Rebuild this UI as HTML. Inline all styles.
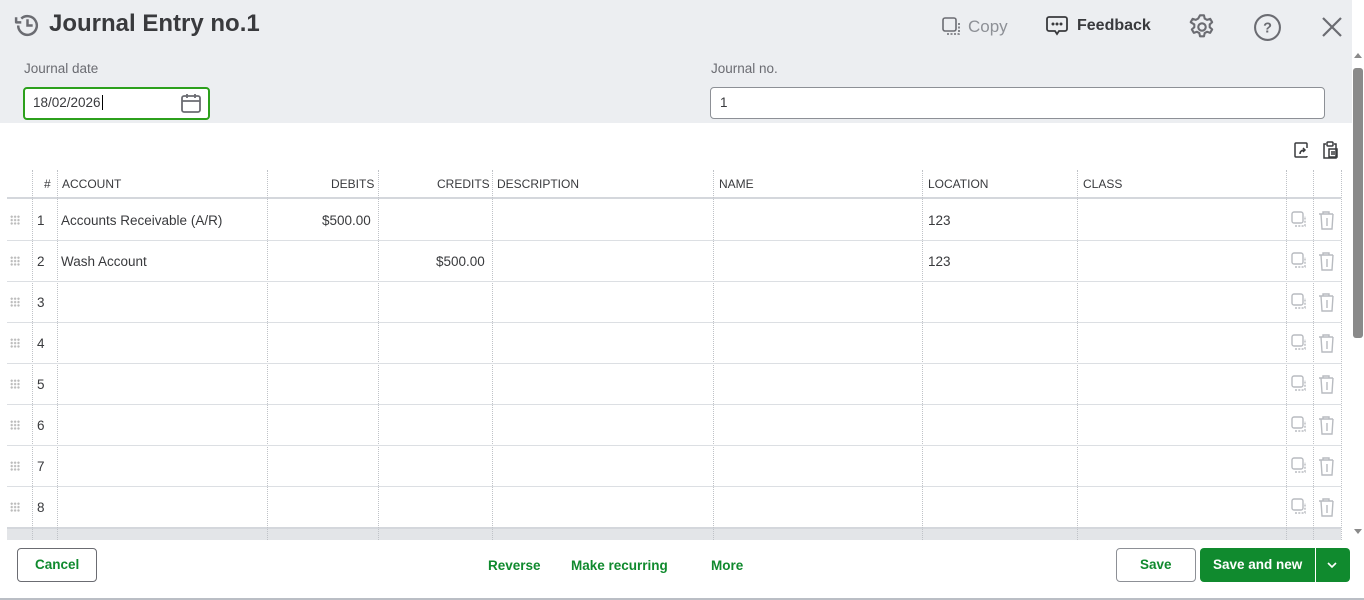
<!DOCTYPE html>
<html><head><meta charset="utf-8"><style>
*{margin:0;padding:0;box-sizing:border-box}
body{width:1364px;height:600px;overflow:hidden;background:#fff;font-family:"Liberation Sans",sans-serif;color:#393a3d;position:relative}
.a{position:absolute}
.hdr{left:0;top:0;width:1352px;height:123px;background:#eceef1}
.vl{position:absolute;top:170px;height:370px;width:0;border-left:1px dotted #bfc2c7}
.hl{position:absolute;left:7px;width:1334px;height:1px;background:#dcdfe3}
.th{position:absolute;top:177px;font-size:12px;color:#393a3d}
.td{position:absolute;font-size:13.5px;color:#393a3d}
.grip{position:absolute;left:10px;width:10px;height:10px;background:radial-gradient(circle,#bbb 1px,transparent 1.3px) 0 0/3.4px 3.4px}
.btn{position:absolute;font-weight:bold;font-size:13.5px;color:#108a2e}
</style></head><body>
<div class="a hdr"></div>
<svg class="a" style="left:13px;top:11px" width="29" height="29" viewBox="0 0 28 28" fill="none" stroke="#6b6c72" stroke-width="2.4"><path d="M5 14a9 9 0 1 0 3-6.7"/><path d="M3 6v5h5" stroke-linejoin="round"/><path d="M14 8v6h5"/></svg>
<div class="a" style="left:49px;top:10px;font-size:24px;font-weight:bold;color:#393a3d">Journal Entry no.1</div>
<svg class="a" style="left:941px;top:16px" width="22" height="20" viewBox="0 0 22 20" fill="none" stroke="#6b6c72" stroke-width="1.6"><rect x="2" y="2" width="13" height="13" rx="2"/><path d="M6 18h12v-12" stroke-dasharray="2 1.5"/></svg>
<div class="a" style="left:968px;top:17px;font-size:17px;color:#8d9096">Copy</div>
<svg class="a" style="left:1045px;top:15px" width="24" height="22" viewBox="0 0 24 22" fill="none" stroke="#393a3d" stroke-width="1.8"><path d="M4 2h16a2 2 0 0 1 2 2v10a2 2 0 0 1-2 2h-6l-2 3-2-3H4a2 2 0 0 1-2-2V4a2 2 0 0 1 2-2z"/><circle cx="8" cy="9" r=".6" fill="#393a3d"/><circle cx="12" cy="9" r=".6" fill="#393a3d"/><circle cx="16" cy="9" r=".6" fill="#393a3d"/></svg>
<div class="a" style="left:1077px;top:17px;font-size:16px;font-weight:bold;color:#393a3d">Feedback</div>
<svg class="a" style="left:1188px;top:13px" width="28" height="28" viewBox="0 0 24 24" fill="none" stroke="#6b6c72" stroke-width="1.8"><circle cx="12" cy="12" r="3.2"/><path d="M10.3 2h3.4l.6 2.8 2 1.1 2.7-.9 1.7 2.9-2.1 1.9v2.4l2.1 1.9-1.7 2.9-2.7-.9-2 1.1-.6 2.8h-3.4l-.6-2.8-2-1.1-2.7.9-1.7-2.9 2.1-1.9v-2.4L2.3 7.9 4 5l2.7.9 2-1.1z" stroke-linejoin="round"/></svg>
<svg class="a" style="left:1253px;top:13px" width="29" height="29" viewBox="0 0 28 28" fill="none" stroke="#6b6c72" stroke-width="2"><circle cx="14" cy="14" r="12"/><text x="14" y="19" font-size="14" font-weight="bold" text-anchor="middle" fill="#6b6c72" stroke="none" font-family="Liberation Sans">?</text></svg>
<svg class="a" style="left:1321px;top:16px" width="22" height="22" viewBox="0 0 22 22" stroke="#6b6c72" stroke-width="2.2"><path d="M2 2l18 18M20 2L2 20"/></svg>
<div class="a" style="left:24px;top:61px;font-size:13.5px;color:#6b6c72">Journal date</div>
<div class="a" style="left:23px;top:87px;width:187px;height:33px;border:2px solid #2ca01c;border-radius:4px;background:#fff"></div>
<div class="a" style="left:33px;top:95px;font-size:13.5px;color:#393a3d">18/02/2026<span style="border-left:1px solid #000;margin-left:1px"></span></div>
<svg class="a" style="left:180px;top:92px" width="22" height="22" viewBox="0 0 22 22" fill="none" stroke="#6b6c72" stroke-width="1.8"><rect x="2" y="4" width="18" height="16" rx="2"/><path d="M2 9h18M7 2v4M15 2v4"/></svg>
<div class="a" style="left:711px;top:61px;font-size:13.5px;color:#6b6c72">Journal no.</div>
<div class="a" style="left:710px;top:87px;width:615px;height:32px;border:1px solid #8d9096;border-radius:4px;background:#fff"></div>
<div class="a" style="left:720px;top:95px;font-size:13.5px">1</div>
<div class="a" style="left:1352px;top:50px;width:12px;height:490px;background:#fff"></div>
<div class="a" style="left:1353px;top:68px;width:10px;height:270px;background:#8a8a8a;border-radius:3px"></div>
<div class="a" style="left:1354px;top:53px;border:4px solid transparent;border-bottom:5px solid #8a8a8a;border-top:0"></div>
<div class="a" style="left:1354px;top:529px;border:4px solid transparent;border-top:5px solid #8a8a8a;border-bottom:0"></div>
<svg class="a" style="left:1293px;top:141px" width="18" height="18" viewBox="0 0 18 18" fill="none" stroke="#393a3d" stroke-width="1.5"><path d="M14 7V3a1 1 0 0 0-1-1H3a1 1 0 0 0-1 1v12a1 1 0 0 0 1 1h10a1 1 0 0 0 1-1"/><path d="M7 13c0-3 2-4 5-4M10 7l2 2-2 2"/></svg>
<svg class="a" style="left:1321px;top:140px" width="18" height="20" viewBox="0 0 18 20" fill="none" stroke="#393a3d" stroke-width="1.5"><path d="M5 4H3v14h12V4h-2"/><rect x="6" y="2" width="6" height="4" rx="1"/><rect x="8" y="9" width="8" height="8"/><path d="M10 12h4M10 14h4"/></svg>
<div class="hl" style="top:197px;height:2px;background:#d4d7dc"></div>
<div class="a" style="left:7px;top:527px;width:1334px;height:13px;background:#e3e5e8;border-top:2px solid #d4d7dc"></div>
<div class="vl" style="left:32px"></div><div class="vl" style="left:57px"></div><div class="vl" style="left:267px"></div><div class="vl" style="left:378px"></div><div class="vl" style="left:492px"></div><div class="vl" style="left:713px"></div><div class="vl" style="left:922px"></div><div class="vl" style="left:1077px"></div><div class="vl" style="left:1286px"></div><div class="vl" style="left:1313px"></div><div class="vl" style="left:1341px"></div>
<div class="th" style="left:44px">#</div>
<div class="th" style="left:62px">ACCOUNT</div>
<div class="th" style="left:331px">DEBITS</div>
<div class="th" style="left:437px">CREDITS</div>
<div class="th" style="left:497px">DESCRIPTION</div>
<div class="th" style="left:719px">NAME</div>
<div class="th" style="left:928px">LOCATION</div>
<div class="th" style="left:1083px">CLASS</div>
<div class="hl" style="top:240px"></div><div class="hl" style="top:281px"></div><div class="hl" style="top:322px"></div><div class="hl" style="top:363px"></div><div class="hl" style="top:404px"></div><div class="hl" style="top:445px"></div><div class="hl" style="top:486px"></div>
<div class="td" style="left:61px;top:213px">Accounts Receivable (A/R)</div>
<div class="td" style="left:322px;top:213px">$500.00</div>
<div class="td" style="left:928px;top:213px">123</div>
<div class="td" style="left:61px;top:254px">Wash Account</div>
<div class="td" style="left:436px;top:254px">$500.00</div>
<div class="td" style="left:928px;top:254px">123</div>
<div class="td" style="left:37px;top:213px">1</div><div class="td" style="left:37px;top:254px">2</div><div class="td" style="left:37px;top:295px">3</div><div class="td" style="left:37px;top:336px">4</div><div class="td" style="left:37px;top:377px">5</div><div class="td" style="left:37px;top:418px">6</div><div class="td" style="left:37px;top:459px">7</div><div class="td" style="left:37px;top:500px">8</div>
<div class="grip" style="top:215px"></div><div class="grip" style="top:256px"></div><div class="grip" style="top:297px"></div><div class="grip" style="top:338px"></div><div class="grip" style="top:379px"></div><div class="grip" style="top:420px"></div><div class="grip" style="top:461px"></div><div class="grip" style="top:502px"></div>
<svg class="a" style="left:1290px;top:210px" width="50" height="310" fill="none" stroke="#b8bbc0" stroke-width="1.4">
<defs><g id="ic"><rect x="2" y="2" width="11" height="11" rx="2"/><path d="M5 16h10V6" stroke-dasharray="2 1.3"/><path d="M29 4h14M33 4V2h6v2M31 4l1 15h10l1-15M37 8v8"/></g></defs>
<use href="#ic" y="0"/><use href="#ic" y="41"/><use href="#ic" y="82"/><use href="#ic" y="123"/><use href="#ic" y="164"/><use href="#ic" y="205"/><use href="#ic" y="246"/><use href="#ic" y="287"/></svg>
<div class="a" style="left:0;top:540px;width:1364px;height:60px;background:#fff;border-bottom:2px solid #babec5"></div>
<div class="a" style="left:17px;top:548px;width:80px;height:34px;border:1px solid #6b6c72;border-radius:4px"></div>
<div class="btn" style="left:35px;top:557px">Cancel</div>
<div class="btn" style="left:488px;top:558px">Reverse</div>
<div class="btn" style="left:571px;top:558px">Make recurring</div>
<div class="btn" style="left:711px;top:558px">More</div>
<div class="a" style="left:1116px;top:548px;width:80px;height:34px;border:1px solid #8d9096;border-radius:4px"></div>
<div class="btn" style="left:1140px;top:557px">Save</div>
<div class="a" style="left:1200px;top:548px;width:150px;height:34px;background:#108a2e;border-radius:4px"></div>
<div class="a" style="left:1315px;top:548px;width:1px;height:34px;background:#fff"></div>
<div class="btn" style="left:1213px;top:557px;color:#fff">Save and new</div>
<svg class="a" style="left:1326px;top:560px" width="12" height="10" viewBox="0 0 12 10" fill="none" stroke="#fff" stroke-width="1.6"><path d="M2 3l4 4 4-4"/></svg>
</body></html>
